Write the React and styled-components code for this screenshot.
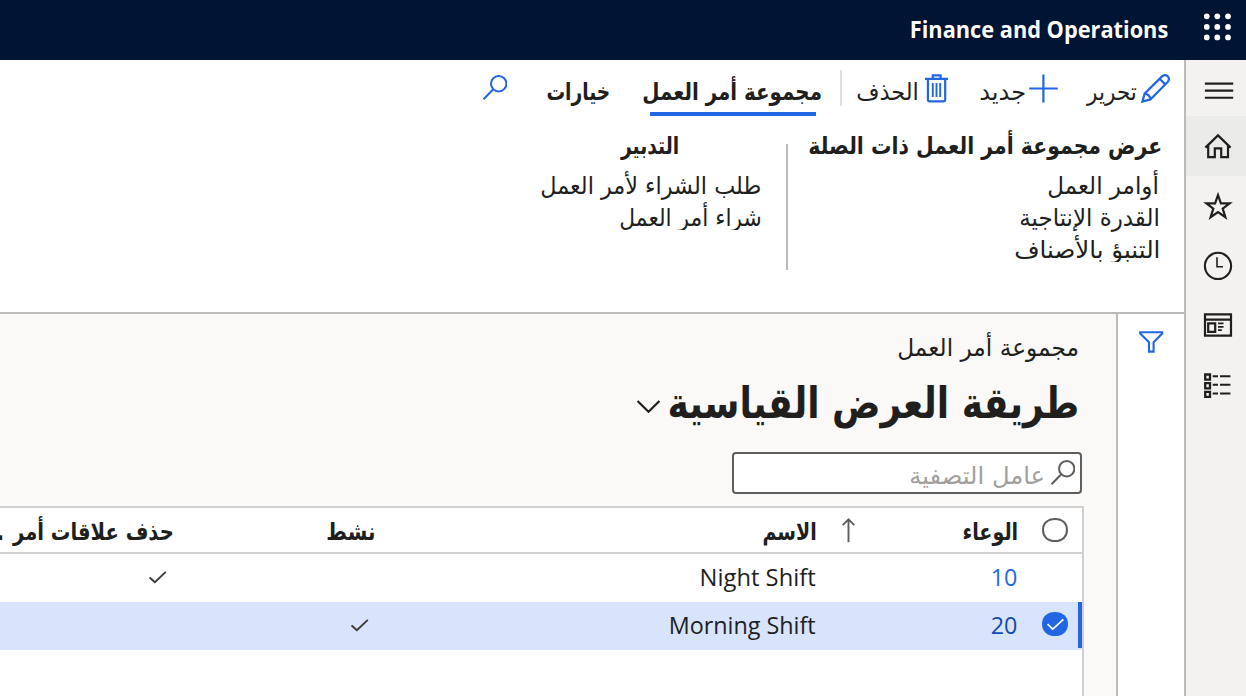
import React, { useLayoutEffect, useRef, useState } from "react";
import styled, { createGlobalStyle } from "styled-components";

const ARABIC = '"DejaVu Sans", sans-serif';
const LATIN = '"Open Sans", "Noto Sans", sans-serif';
const BLUE = "#2266e3";
const INK = "#201f1e";

const GlobalStyle = createGlobalStyle`
  body { margin: 0; background: #fff; overflow: hidden; }
  svg { display: block; flex: none; }
`;

/* ---------- text that fills an exact width ---------- */

const LabelBox = styled.span`
  display: flex;
  direction: ltr;
  flex: none;
  width: ${(p) => p.$w}px;
  height: ${(p) => p.$lh}px;
  margin-top: ${(p) => p.$mt}px;
  font-family: ${(p) => (p.$latin ? LATIN : ARABIC)};
  font-size: ${(p) => p.$size}px;
  font-weight: ${(p) => p.$weight};
  line-height: ${(p) => p.$lh}px;
  color: ${(p) => p.$color};
`;

const LabelText = styled.span`
  display: block;
  flex: none;
  white-space: pre;
  transform-origin: 0 50%;
`;

function Label({ children, w, size = 24, weight = 400, lh = 32, mt = 0, latin = false, color = INK }) {
  const ref = useRef(null);
  const [transform, setTransform] = useState("none");
  useLayoutEffect(() => {
    const cs = getComputedStyle(ref.current);
    const ctx = document.createElement("canvas").getContext("2d");
    ctx.font = `${cs.fontWeight} ${cs.fontSize} ${cs.fontFamily}`;
    ctx.direction = latin ? "ltr" : "rtl";
    ctx.textAlign = "left";
    const m = ctx.measureText(children);
    const ink = m.actualBoundingBoxRight + m.actualBoundingBoxLeft;
    // One pixel is kept free for antialiasing at the two ends.
    const k = (w - 1) / ink;
    const shift = m.actualBoundingBoxLeft * k + (latin ? 0.6 : 0.2);
    setTransform(`translateX(${shift}px) scaleX(${k})`);
  }, [children, w, size, weight, latin]);
  return (
    <LabelBox $w={w} $lh={lh} $mt={mt} $size={size} $weight={weight} $latin={latin} $color={color}>
      <LabelText ref={ref} dir={latin ? "ltr" : "rtl"} style={{ transform }}>
        {children}
      </LabelText>
    </LabelBox>
  );
}

/* ---------- icons ---------- */

const Icon = ({ w, h, sw = 2, color = INK, children }) => (
  <svg width={w} height={h} viewBox={`0 0 ${w} ${h}`} fill="none" stroke={color} strokeWidth={sw}>
    {children}
  </svg>
);

const WaffleIcon = () => (
  <svg width="28" height="28" viewBox="0 0 28 28" fill="#fff">
    {[3.3, 13.9, 24.4].map((y) => [2.7, 13.3, 24].map((x) => <circle key={x + "-" + y} cx={x} cy={y} r="2.9" />))}
  </svg>
);

const PencilIcon = () => (
  <Icon w={29} h={29} color={BLUE} sw={2.2}>
    <path d="M1.4 27.6 L3.6 19.6 L21 2.4 C23 .7 25.2 .9 26.7 2.3 C28.1 3.7 28.3 6 26.6 8 L9.4 25.4 Z M3.6 19.6 C6.8 20 9 22.2 9.4 25.4 M18.6 4.8 L24.2 10.4" />
  </Icon>
);

const PlusIcon = () => (
  <Icon w={29} h={29} color={BLUE} sw={2.2}>
    <path d="M14.4 .5 V28.5 M.2 14.5 H28.8" />
  </Icon>
);

const TrashIcon = () => (
  <Icon w={23} h={29} color={BLUE} sw={2.2}>
    <path d="M0 4.9 H23 M7.8 4.9 V1.4 H15.6 V4.9 M2.9 4.9 V25.6 Q2.9 27.4 4.7 27.4 H18.4 Q20.2 27.4 20.2 25.6 V4.9" />
    <path d="M7.8 9 V23 M11.5 9 V23 M15.2 9 V23" strokeWidth="1.9" />
  </Icon>
);

const SearchIcon = ({ color }) => (
  <Icon w={24} h={25} color={color} sw={2}>
    <circle cx="15.7" cy="8.7" r="7.7" />
    <path d="M10.3 14.2 L.5 24.2" />
  </Icon>
);

const FunnelIcon = () => (
  <Icon w={25} h={22} color={BLUE} sw={2.1}>
    <path d="M1.2 1.2 H23.2 V2.6 L14.6 11.2 V20.6 H10 V11.2 L1.2 2.6 Z" />
  </Icon>
);

const ChevronIcon = () => (
  <Icon w={23} h={14} sw={2.1}>
    <path d="M.6 1 L11.5 11.8 L22.4 1" />
  </Icon>
);

const ArrowUpIcon = () => (
  <Icon w={13} h={25} color="#5f5d5b" sw={1.9}>
    <path d="M6.5 24.2 V1.4 M.7 7.2 L6.5 1.4 L12.3 7.2" />
  </Icon>
);

const CheckIcon = () => (
  <Icon w={18} h={13} color="#3b3a39" sw={1.9}>
    <path d="M.6 6.4 L5.9 11.2 L16.8 .9" />
  </Icon>
);

const CIRCLE = "M13 1 C20.5 1 25 5.6 25 12 C25 18.4 20.5 23 13 23 C5.5 23 1 18.4 1 12 C1 5.6 5.5 1 13 1 Z";

const EmptyCircle = () => (
  <Icon w={26} h={24} color="#5f5d5b" sw={2}>
    <path d={CIRCLE} />
  </Icon>
);

const CheckedCircle = () => (
  <Icon w={26} h={24} color={BLUE}>
    <path d={CIRCLE} fill={BLUE} />
    <path d="M5.6 12.2 L10.8 17.2 L21.4 7.4" stroke="#fff" strokeWidth="1.7" />
  </Icon>
);

const MenuIcon = () => (
  <Icon w={60} h={56} sw={2.1}>
    <path d="M18.9 23.6 H47.2 M18.9 30.6 H47.2 M18.9 37.7 H47.2" />
  </Icon>
);

const HomeIcon = () => (
  <Icon w={60} h={60} sw={2.2}>
    <path d="M19.4 31.6 L32 19.4 L44.6 31.6 M22.2 29.4 V41.2 H28.8 V32.4 H35.2 V41.2 H42 V29.4" />
  </Icon>
);

const StarIcon = () => (
  <Icon w={60} h={60} sw={2.2}>
    <path d="M32 19 L34.9 27.3 H43.6 L36.7 32.6 L39.4 41.2 L32 36.1 L24.6 41.2 L27.3 32.6 L20.4 27.3 H29.1 Z" />
  </Icon>
);

const ClockIcon = () => (
  <Icon w={60} h={60} sw={2.1}>
    <circle cx="32" cy="29.9" r="13.1" />
    <path d="M31 21.3 V30.8 H37" strokeWidth="1.6" />
  </Icon>
);

const WorkspaceIcon = () => (
  <Icon w={60} h={60} sw={2.2}>
    <path d="M19 18.4 H45 V39.6 H19 Z M19 23.7 H45 M22.2 27.4 H29.2 V35.9 H22.2 Z" />
    <path d="M32 27.4 H37.5 M32 30.8 H37.5 M32 34.1 H35.8" strokeWidth="1.8" />
  </Icon>
);

const ModulesIcon = () => (
  <Icon w={60} h={60} sw={2.3}>
    <path d="M19.2 18.5 H24 V23.7 H19.2 Z M19.2 27.2 H24 V32.4 H19.2 Z M19.2 35.9 H24 V40.9 H19.2 Z" />
    <path d="M26.7 20.2 H32 M34 20.2 H44.4 M26.7 28.8 H32 M34 28.8 H44.4 M26.7 37.6 H32 M34 37.6 H44.4" strokeWidth="2" />
  </Icon>
);

/* ---------- frame ---------- */

const Page = styled.div`
  width: 1246px;
  height: 696px;
  display: flex;
  flex-direction: column;
  direction: rtl;
  overflow: hidden;
  background: #fff;
`;

const TopBar = styled.header`
  display: flex;
  align-items: flex-start;
  flex: none;
  height: 60px;
  padding: 13px 14px 0 0;
  gap: 36px;
  box-sizing: border-box;
  background: #001433;
`;

const Body = styled.div`
  display: flex;
  flex: 1;
  min-height: 0;
`;

const NavRail = styled.nav`
  flex: none;
  width: 60px;
  border-left: 2px solid #bdbbb8;
  background: #f3f2f1;
`;

const NavSlot = styled.div`
  background: ${(p) => (p.$active ? "#ebebe9" : "transparent")};
`;

const Main = styled.main`
  display: flex;
  flex-direction: column;
  flex: 1;
  min-width: 0;
`;

/* ---------- action pane ---------- */

const ActionPane = styled.section`
  flex: none;
  height: 252px;
  border-bottom: 2px solid #bdbbb8;
`;

const Toolbar = styled.div`
  display: flex;
  height: 56px;
  padding-right: 14px;
`;

const Action = styled.div`
  display: flex;
  gap: ${(p) => p.$gap}px;
  padding-top: 13.5px;
  margin-left: ${(p) => p.$after}px;
`;

const ToolDivider = styled.div`
  width: 2px;
  height: 36px;
  margin: 10px 0 0 18px;
  background: #e1dfdd;
`;

const Tab = styled.div`
  padding-top: 16px;
  margin-left: ${(p) => p.$after}px;
`;

const TabUnderline = styled.div`
  width: 166px;
  height: 4px;
  margin: 4px 6px 0 0;
  background: ${BLUE};
`;

const ToolSearch = styled.div`
  padding-top: 15px;
`;

const Groups = styled.div`
  display: flex;
  padding: 14px 23px 0 0;
`;

const Group = styled.div`
  width: ${(p) => p.$w}px;
`;

const GroupHeading = styled.div`
  padding-right: ${(p) => p.$inset || 0}px;
`;

const GroupList = styled.div`
  margin-top: 8px;
  padding-right: ${(p) => p.$inset}px;
  height: ${(p) => p.$h}px;
  overflow: hidden;
`;

const GroupDivider = styled.div`
  width: 2px;
  height: 126px;
  margin: 14px 21px 0 25px;
  background: #bdbbb8;
`;

/* ---------- list page ---------- */

const Workspace = styled.div`
  display: flex;
  flex: 1;
  min-height: 0;
`;

const FilterRail = styled.aside`
  flex: none;
  width: 68px;
  padding: 17px 20px 0 0;
  box-sizing: border-box;
  border-left: 2px solid #bdbbb8;
`;

const Content = styled.section`
  display: flex;
  flex-direction: column;
  flex: 1;
  min-width: 0;
  padding-top: 18px;
  background: #faf9f8;
`;

const Caption = styled.div`
  padding-right: 38px;
`;

const Title = styled.div`
  display: flex;
  align-items: center;
  gap: 9px;
  margin-top: 11px;
  padding-right: 38px;
`;

const ChevronSlot = styled.span`
  padding-top: 8px;
`;

const FilterInput = styled.div`
  display: flex;
  gap: 8px;
  width: 350px;
  height: 42px;
  margin: 21px 34px 0 0;
  padding: 6px 5px 0 0;
  box-sizing: border-box;
  border: 2px solid #605e5c;
  border-radius: 4px;
  background: #fff;
`;

const Table = styled.div`
  flex: 1;
  margin: 12px 32px 0 0;
  border-top: 2px solid #d2d0ce;
  border-right: 2px solid #d2d0ce;
  background: #fff;
  overflow: hidden;
`;

const Row = styled.div`
  display: grid;
  grid-template-columns: 64px 202px 442px 201px 173px;
  height: ${(p) => (p.$head ? 44 : 48)}px;
  border-bottom: ${(p) => (p.$head ? "2px solid #d2d0ce" : "none")};
  background: ${(p) => (p.$selected ? "#d8e4fb" : "transparent")};
`;

const Cell = styled.div`
  display: flex;
  min-width: 0;
  padding-right: ${(p) => p.$inset || 0}px;
  padding-top: ${(p) => p.$top || 0}px;
  gap: ${(p) => p.$gap || 0}px;
`;

const SortSlot = styled.span`
  margin-right: auto;
  padding: 10px 0 0 26px;
`;

const SelectCell = styled.div`
  display: flex;
  padding-right: ${(p) => (p.$marked ? 0 : 14)}px;
  gap: 10px;
`;

const Marker = styled.div`
  width: 4px;
  height: 46px;
  background: ${BLUE};
`;

const CircleSlot = styled.span`
  padding-top: 10px;
`;

export default function App() {
  return (
    <Page>
      <GlobalStyle />
      <TopBar>
        <WaffleIcon />
        <Label w={257} size={23.5} weight={700} lh={32} latin color="#fff">Finance and Operations</Label>
      </TopBar>
      <Body>
        <NavRail>
          <NavSlot><MenuIcon /></NavSlot>
          <NavSlot $active><HomeIcon /></NavSlot>
          <NavSlot><StarIcon /></NavSlot>
          <NavSlot><ClockIcon /></NavSlot>
          <NavSlot><WorkspaceIcon /></NavSlot>
          <NavSlot><ModulesIcon /></NavSlot>
        </NavRail>
        <Main>
          <ActionPane>
            <Toolbar>
              <Action $gap={4} $after={28}>
                <PencilIcon />
                <Label w={51} mt={2}>تحرير</Label>
              </Action>
              <Action $gap={3} $after={32}>
                <PlusIcon />
                <Label w={46} mt={2}>جديد</Label>
              </Action>
              <Action $gap={7} $after={15}>
                <TrashIcon />
                <Label w={61} mt={2}>الحذف</Label>
              </Action>
              <ToolDivider />
              <Tab $after={33}>
                <Label w={179} weight={700}>مجموعة أمر العمل</Label>
                <TabUnderline />
              </Tab>
              <Tab $after={40}>
                <Label w={63} weight={700}>خيارات</Label>
              </Tab>
              <ToolSearch><SearchIcon color={BLUE} /></ToolSearch>
            </Toolbar>
            <Groups>
              <Group $w={352}>
                <GroupHeading>
                  <Label w={352} weight={700}>عرض مجموعة أمر العمل ذات الصلة</Label>
                </GroupHeading>
                <GroupList $inset={2} $h={92}>
                  <Label w={111}>أوامر العمل</Label>
                  <Label w={139}>القدرة الإنتاجية</Label>
                  <Label w={144.5}>التنبؤ بالأصناف</Label>
                </GroupList>
              </Group>
              <GroupDivider />
              <Group $w={220}>
                <GroupHeading $inset={82}>
                  <Label w={59} weight={700}>التدبير</Label>
                </GroupHeading>
                <GroupList $inset={0} $h={60}>
                  <Label w={220}>طلب الشراء لأمر العمل</Label>
                  <Label w={141.5}>شراء أمر العمل</Label>
                </GroupList>
              </Group>
            </Groups>
          </ActionPane>
          <Workspace>
            <FilterRail><FunnelIcon /></FilterRail>
            <Content>
              <Caption><Label w={180}>مجموعة أمر العمل</Label></Caption>
              <Title>
                <Label w={409} size={43} weight={700} lh={56}>طريقة العرض القياسية</Label>
                <ChevronSlot><ChevronIcon /></ChevronSlot>
              </Title>
              <FilterInput>
                <SearchIcon color="#5f5d5b" />
                <Label w={133.5} color="#a19f9d">عامل التصفية</Label>
              </FilterInput>
              <Table>
                <Row $head>
                  <SelectCell><CircleSlot><EmptyCircle /></CircleSlot></SelectCell>
                  <Cell>
                    <Label w={55} weight={700} mt={8}>الوعاء</Label>
                    <SortSlot><ArrowUpIcon /></SortSlot>
                  </Cell>
                  <Cell><Label w={53.5} weight={700} mt={8}>الاسم</Label></Cell>
                  <Cell><Label w={47.5} weight={700} mt={8}>نشط</Label></Cell>
                  <Cell $gap={9}>
                    <Label w={161.5} weight={700} mt={8}>حذف علاقات أمر</Label>
                    <Label w={17} weight={700} mt={8}>...</Label>
                  </Cell>
                </Row>
                <Row>
                  <SelectCell />
                  <Cell $inset={1}><Label w={25} lh={46} latin color={BLUE}>10</Label></Cell>
                  <Cell $inset={0.5}><Label w={114.5} lh={46} latin>Night Shift</Label></Cell>
                  <Cell />
                  <Cell $inset={6} $top={17}><CheckIcon /></Cell>
                </Row>
                <Row $selected>
                  <SelectCell $marked>
                    <Marker />
                    <CircleSlot><CheckedCircle /></CircleSlot>
                  </SelectCell>
                  <Cell $inset={1}><Label w={26} lh={46} latin color="#1649ae">20</Label></Cell>
                  <Cell $inset={0.5}><Label w={145.5} lh={46} latin>Morning Shift</Label></Cell>
                  <Cell $inset={5} $top={17}><CheckIcon /></Cell>
                  <Cell />
                </Row>
              </Table>
            </Content>
          </Workspace>
        </Main>
      </Body>
    </Page>
  );
}
